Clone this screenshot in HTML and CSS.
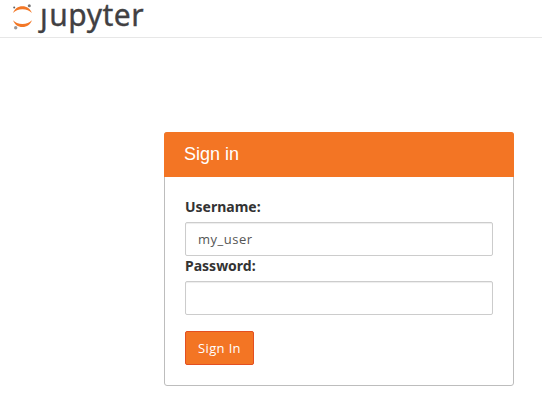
FILE: index.html
```html
<!DOCTYPE html>
<html lang="en">
<head>
<meta charset="utf-8">
<title>Jupyter</title>
<link rel="stylesheet" href="styles.css">
</head>
<body>
<header class="header">
  <svg class="mark" width="24" height="30" viewBox="0 0 24 30">
    <path fill="#f37726" d="M1.100 13C2.500 8.800 6 6.200 10.400 6.200S18.500 8.800 19.900 13C17.800 10.700 14.300 9.300 10.400 9.300S3 10.700 1.100 13Z"/>
    <path fill="#f37726" d="M1.100 20.200C3 22.500 6.500 23.900 10.400 23.900S17.800 22.500 19.900 20.200C18.500 24.400 15 27 10.400 27S2.500 24.400 1.100 20.200Z"/>
    <circle cx="17.300" cy="5.700" r="1.500" fill="#767677"/>
    <circle cx="2.200" cy="7.500" r="1" fill="#616262"/>
    <circle cx="3.700" cy="27.700" r="1.700" fill="#989798"/>
  </svg>
  <div class="wordmark"><span class="initial">j</span><span>upyter</span></div>
</header>
<main class="panel">
  <h1 class="panel-title">Sign in</h1>
  <form class="panel-body">
    <label class="label" for="user">Username:</label>
    <input class="field" id="user" type="text" value="my_user">
    <label class="label" for="pass">Password:</label>
    <input class="field" id="pass" type="password">
    <button class="submit" type="button">Sign In</button>
  </form>
</main>
</body>
</html>
```

FILE: styles.css
```css
* { box-sizing: border-box; }
body {
  margin: 0;
  height: 406px;
  overflow: hidden;
  background: #fff;
  color: #333;
  font: 14px/20px "Noto Sans", sans-serif;
}
.header {
  display: flex;
  height: 38px;
  padding-left: 12px;
  border-bottom: 1px solid #e7e7e7;
}
.mark { flex: none; }
.wordmark {
  display: flex;
  margin-left: 4px;
  height: 37px;
  font: 30px/30px "Noto Sans", sans-serif;
  letter-spacing: .5px;
  color: #414042;
  -webkit-text-stroke: .35px #414042;
}
.initial {
  margin-right: 1px;
  clip-path: inset(8px -8px -10px -8px);
}
.panel {
  width: 350px;
  height: 254px;
  margin: 94px 0 0 164px;
  border: 1px solid #bdbdbd;
  border-radius: 3px;
}
.panel-title {
  height: 45px;
  margin: -1px -1px 0;
  padding-left: 20px;
  border-radius: 3px 3px 0 0;
  background: #f37524;
  color: #fff;
  font: 18px/45px "Liberation Sans", sans-serif;
}
.panel-body { padding: 20px 20px 0; }
.label {
  display: block;
  height: 20px;
  margin-bottom: 5px;
  font-weight: 700;
}
.field {
  display: block;
  width: 308px;
  height: 34px;
  padding: 6px 12px;
  border: 1px solid #ccc;
  border-radius: 2px;
  box-shadow: inset 0 1px 1px rgba(0, 0, 0, .075);
  font: 13px/20px "Open Sans", sans-serif;
  letter-spacing: .5px;
  color: #555;
}
.submit {
  display: block;
  width: 69px;
  height: 34px;
  margin-top: 16px;
  padding: 0;
  border: 1px solid #e34f21;
  border-radius: 2px;
  background: #f37524;
  color: #fff;
  font: 13px/20px "Open Sans", sans-serif;
  letter-spacing: .35px;
}
```
